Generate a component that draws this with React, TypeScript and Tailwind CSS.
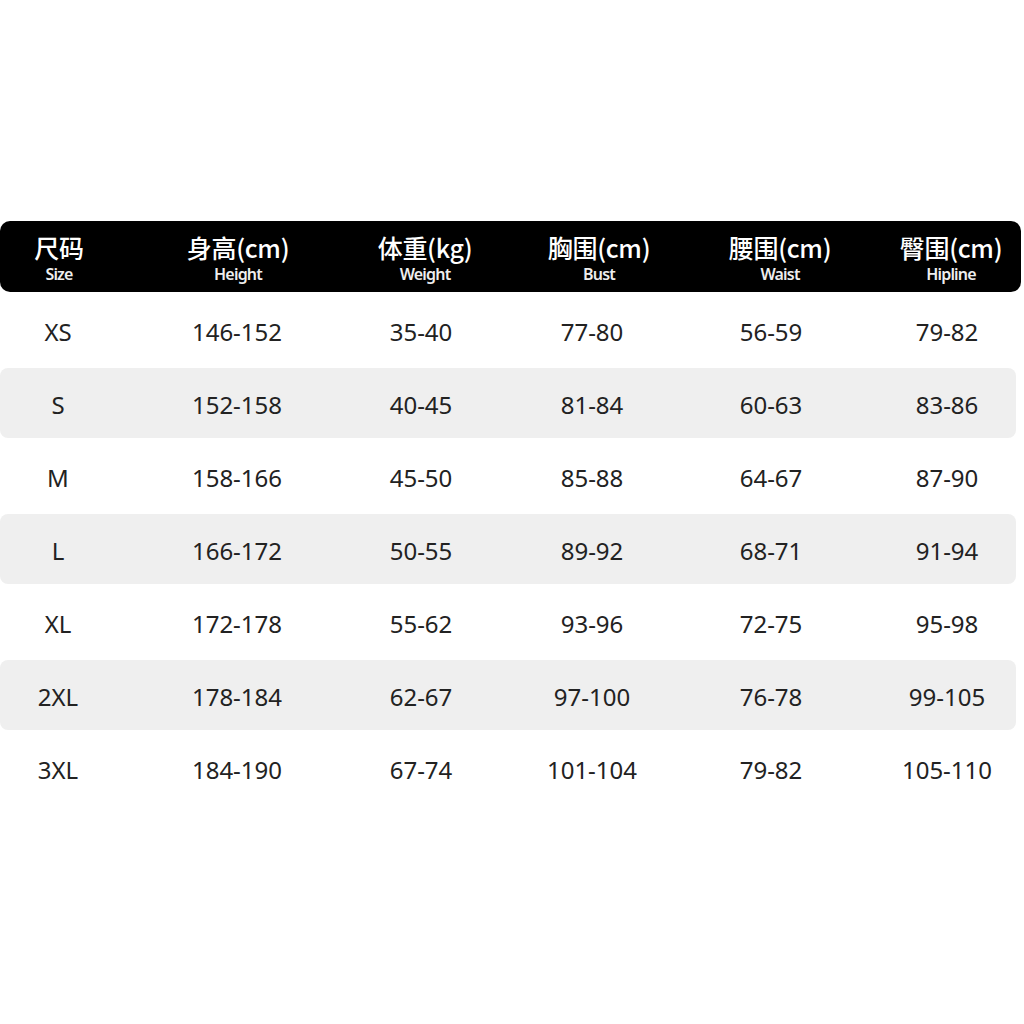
const headers = [
  { cn: '尺码', en: 'Size' },
  { cn: '身高(cm)', en: 'Height' },
  { cn: '体重(kg)', en: 'Weight' },
  { cn: '胸围(cm)', en: 'Bust' },
  { cn: '腰围(cm)', en: 'Waist' },
  { cn: '臀围(cm)', en: 'Hipline' },
]

const rows = [
  ['XS', '146-152', '35-40', '77-80', '56-59', '79-82'],
  ['S', '152-158', '40-45', '81-84', '60-63', '83-86'],
  ['M', '158-166', '45-50', '85-88', '64-67', '87-90'],
  ['L', '166-172', '50-55', '89-92', '68-71', '91-94'],
  ['XL', '172-178', '55-62', '93-96', '72-75', '95-98'],
  ['2XL', '178-184', '62-67', '97-100', '76-78', '99-105'],
  ['3XL', '184-190', '67-74', '101-104', '79-82', '105-110'],
]

const cjk = { fontFamily: '"Noto Sans CJK SC", "Noto Sans", sans-serif' }
const latin = { fontFamily: '"Noto Sans", "Noto Sans CJK SC", sans-serif' }

export default function App() {
  return (
    <main className="min-h-[1024px] w-[1024px] bg-white pt-[221px]" style={cjk}>
      <div className="grid h-[71px] w-[1021px] grid-cols-[118px_240px_134px_214px_148px_1fr] items-start rounded-[10px] bg-black pt-[12px] text-white">
        {headers.map((h, i) => (
          <div key={h.en} className={`flex flex-col items-center ${i === 5 ? 'pl-[27px]' : ''}`}>
            <span className="text-[25px] font-medium leading-[28px] tracking-[-0.3px]">{h.cn}</span>
            <span className="mt-[3px] text-[16px] font-semibold leading-[20px] tracking-[-0.8px] text-[#eee]" style={latin}>
              {h.en}
            </span>
          </div>
        ))}
      </div>

      <div className="mt-[3px] flex w-[1016px] flex-col gap-[3px]" style={latin}>
        {rows.map((r, ri) => (
          <div
            key={r[0]}
            className={`grid h-[70px] grid-cols-[116px_242px_126px_216px_142px_1fr] items-center rounded-[8px] text-[24px] text-[#222] ${ri % 2 === 1 ? 'bg-[#efefef]' : ''}`}
          >
            {r.map((v, i) => (
              <div key={i} className={`pt-[3px] text-center leading-none ${i === 5 ? 'pl-[36px]' : ''}`}>
                {v}
              </div>
            ))}
          </div>
        ))}
      </div>
    </main>
  )
}
